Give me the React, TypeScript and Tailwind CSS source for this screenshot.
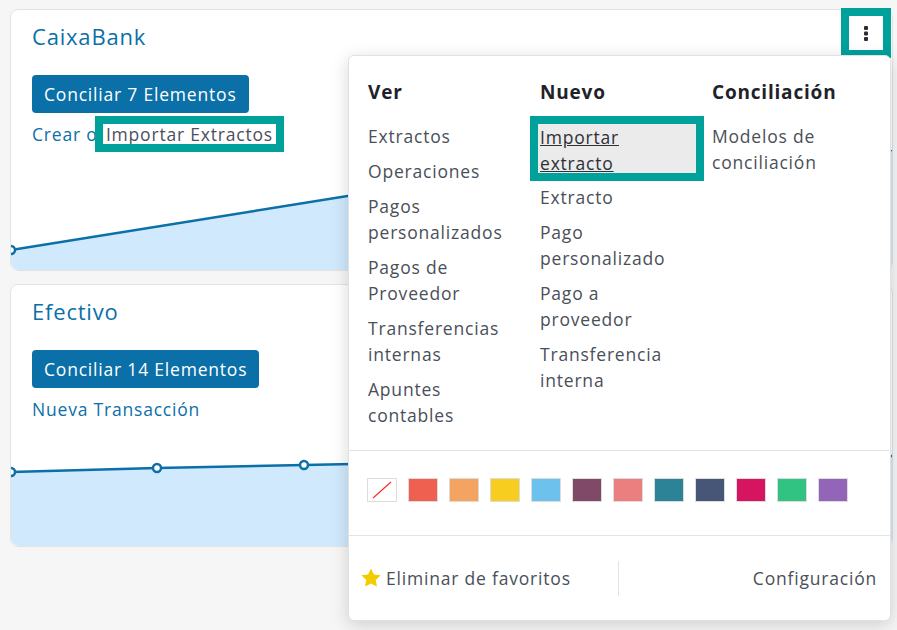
import React from 'react';

const font = { fontFamily: '"Open Sans", "Liberation Sans", sans-serif', letterSpacing: '0.05em' };

const SWATCHES = [
  '#f06050', '#f4a460', '#f7cd1f', '#6cc1ed', '#814968', '#eb7e7f',
  '#2c8397', '#475577', '#d6145f', '#30c381', '#9365b8',
];

const VER = ['Extractos', 'Operaciones', 'Pagos personalizados', 'Pagos de Proveedor', 'Transferencias internas', 'Apuntes contables'];
const NUEVO = ['Extracto', 'Pago personalizado', 'Pago a proveedor', 'Transferencia interna'];

// chart line + fill, drawn in pixel coordinates of the card
const Chart: React.FC<{ height: number; points: [number, number][] }> = ({ height, points }) => {
  const line = points.map(p => p.join(',')).join(' ');
  const area = `0,${height} ${line} 883,${height}`;
  return (
    <svg width="883" height={height} viewBox={`0 0 883 ${height}`} className="block">
      <polygon points={area} fill="#d0e9fc" />
      <polyline points={line} fill="none" stroke="#0b6fa8" strokeWidth="2.5" />
      {points.slice(0, -1).map(([x, y], i) => (
        <circle key={i} cx={x} cy={y} r="4" fill="white" stroke="#0b6fa8" strokeWidth="2.5" />
      ))}
    </svg>
  );
};

const Item: React.FC<{ label: string }> = ({ label }) => (
  <div className="w-[145px] py-[4.5px] leading-[26px] text-[17.5px] text-[#4a4f59]">{label}</div>
);

const App: React.FC = () => {
  return (
    <div style={font} className="relative w-[897px] h-[630px] overflow-hidden bg-[#f6f6f6]">
      <div className="flex flex-col gap-[13px] pt-[9px] pl-[10px]">
        {/* CaixaBank card */}
        <div className="w-[883px] h-[262px] bg-white border border-[#e3e3e3] rounded-lg flex flex-col">
          <div className="flex items-start justify-between pl-[21px] pr-[9px] pt-[6px]">
            <div className="mt-[5px] text-[22px] leading-[30px] text-[#0b6fa8]">CaixaBank</div>
            <button className="w-[34px] h-[34px] flex items-center justify-center bg-white outline-8 outline-[#00a09b]">
              <svg width="4" height="15" viewBox="0 0 4 15">
                <rect x="0" y="0" width="4" height="4" rx="1" fill="#2a2d33" />
                <rect x="0" y="5.5" width="4" height="4" rx="1" fill="#2a2d33" />
                <rect x="0" y="11" width="4" height="4" rx="1" fill="#2a2d33" />
              </svg>
            </button>
          </div>
          <div className="pl-[21px] mt-[24px]">
            <button className="px-3 py-[6px] rounded bg-[#0b6fa8] text-white text-[17.5px] leading-[26px]">
              Conciliar 7 Elementos
            </button>
          </div>
          <div className="pl-[21px] mt-[8px] text-[17.5px] leading-[26px] text-[#0b6fa8]">
            Crear o{' '}
            <span className="inline-block leading-[20px] px-[3px] bg-white text-[#4a5060] outline-8 outline-[#00a09b]">
              Importar Extractos
            </span>
          </div>
          <div className="mt-auto overflow-hidden rounded-b-lg">
            <Chart height={120} points={[[0, 100], [480, 23], [883, 0]]} />
          </div>
        </div>

        {/* Efectivo card */}
        <div className="w-[883px] h-[263px] bg-white border border-[#e3e3e3] rounded-lg flex flex-col">
          <div className="pl-[21px] pt-[11px] text-[22px] leading-[30px] text-[#0b6fa8]">Efectivo</div>
          <div className="pl-[21px] mt-[24px]">
            <button className="px-3 py-[6px] rounded bg-[#0b6fa8] text-white text-[17.5px] leading-[26px]">
              Conciliar 14 Elementos
            </button>
          </div>
          <div className="pl-[21px] mt-[8px] text-[17.5px] leading-[26px] text-[#0b6fa8]">Nueva Transacción</div>
          <div className="mt-auto overflow-hidden rounded-b-lg">
            <Chart height={127} points={[[0, 50], [146, 46], [293, 43], [440, 40], [587, 38], [734, 36], [883, 34]]} />
          </div>
        </div>
      </div>

      {/* Dropdown menu */}
      <div className="absolute left-[348px] top-[55px] w-[543px] h-[566px] bg-white border border-[#dee2e6] rounded-md shadow-[0_4px_18px_rgba(0,0,0,0.16)] flex flex-col">
        <div className="grid grid-cols-[172px_172px_172px] pl-[19px] pt-[22px] pb-[18px]">
          <div>
            <div className="mb-[12px] text-[19px] leading-[28px] font-bold text-[#1f2329]">Ver</div>
            {VER.map(l => <Item key={l} label={l} />)}
          </div>
          <div>
            <div className="mb-[12px] text-[19px] leading-[28px] font-bold text-[#1f2329]">Nuevo</div>
            <div className="pt-[6px] pb-[6px]">
              <div className="-ml-[2px] pl-[2px] w-[158px] h-[49px] bg-[#ebebeb] outline-8 outline-[#00a09b] text-[17.5px] leading-[26px] text-[#2d3038] underline">
                Importar<br />extracto
              </div>
            </div>
            {NUEVO.map(l => <Item key={l} label={l} />)}
          </div>
          <div>
            <div className="mb-[12px] text-[19px] leading-[28px] font-bold text-[#1f2329]">Conciliación</div>
            <Item label="Modelos de conciliación" />
          </div>
        </div>

        <div className="border-t border-[#e3e3e3] pl-[18px] pt-[27px] pb-[33px] flex gap-[11px]">
          <div className="w-[30px] h-[24px] border border-[#dcdcdc] bg-white">
            <svg width="28" height="22" viewBox="0 0 28 22" className="block">
              <line x1="5" y1="19" x2="23" y2="3" stroke="#ff2a2a" strokeWidth="1.2" />
            </svg>
          </div>
          {SWATCHES.map(c => (
            <div key={c} className="w-[30px] h-[24px] border border-[#dcdcdc]" style={{ backgroundColor: c }} />
          ))}
        </div>

        <div className="flex-1 border-t border-[#e3e3e3] flex items-center">
          <div className="flex-1 flex items-center gap-[4px] pl-[11px] text-[17.5px] text-[#4a4f59]">
            <svg width="22" height="22" viewBox="0 0 24 24">
              <path d="M12 1.5l3.2 6.6 7.3 1-5.3 5.1 1.3 7.2L12 18l-6.5 3.4 1.3-7.2L1.5 9.1l7.3-1z" fill="#f3cc00" />
            </svg>
            Eliminar de favoritos
          </div>
          <div className="w-px h-[35px] bg-[#e3e3e3]" />
          <div className="flex-1 text-right pr-[13px] text-[17.5px] text-[#4a4f59]">Configuración</div>
        </div>
      </div>
    </div>
  );
};

export default App;
